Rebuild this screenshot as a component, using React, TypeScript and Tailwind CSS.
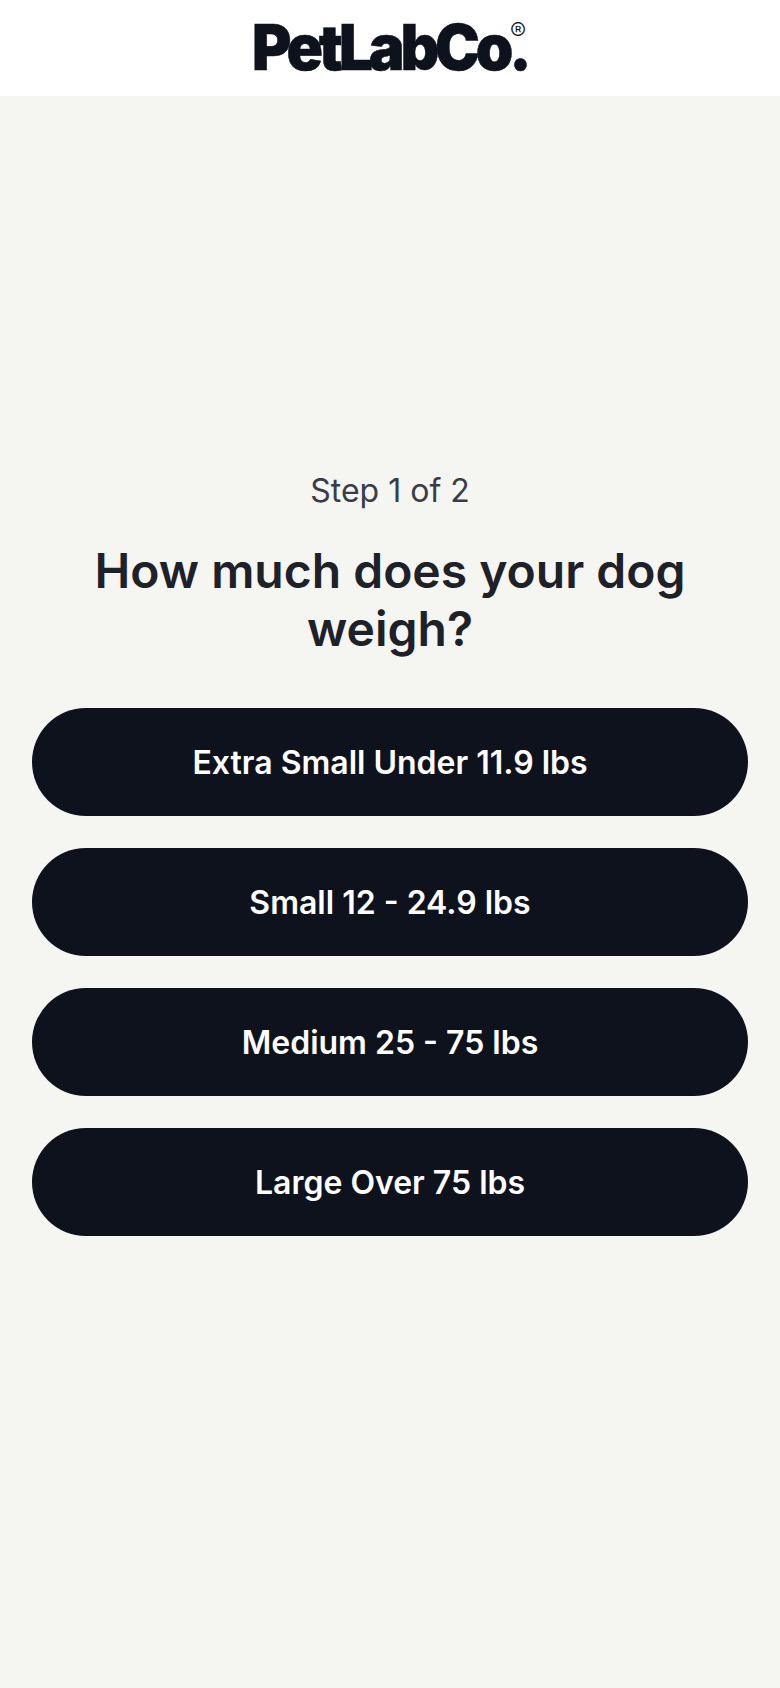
export default function App() {
  const options = ["Extra Small Under 11.9 lbs", "Small 12 - 24.9 lbs", "Medium 25 - 75 lbs", "Large Over 75 lbs"];
  return (
    <div className="min-h-[1688px] bg-[#f5f5f1] font-['Inter',sans-serif]">
      <header className="h-[96px] bg-white flex items-center justify-center">
        <div className="relative w-[272px] text-[#0e121d] mt-[-1px] mr-[4px]">
          <div className="origin-left scale-x-[0.955] whitespace-nowrap font-black text-[63px] leading-none tracking-[-0.07em] [-webkit-text-stroke:0.5px_#0e121d]">PetLabCo.</div>
          <span className="absolute right-[-2px] top-[2px] text-[24px] leading-[28px] font-light">®</span>
        </div>
      </header>
      <main className="px-8 pt-[374px] flex flex-col items-center">
        <p className="text-[32px] leading-[42px] text-[#3a3d47]">Step 1 of 2</p>
        <h1 className="mt-[30px] text-[48px] leading-[58px] font-semibold text-[#1f2129] text-center w-full">How much does your dog weigh?</h1>
        <div className="mt-[50px] w-full flex flex-col gap-8">
          {options.map((o) => (
            <button key={o} className="h-[108px] w-full rounded-[54px] bg-[#0e121d] text-white text-[32px] font-semibold flex items-center justify-center pt-px">
              {o}
            </button>
          ))}
        </div>
      </main>
    </div>
  );
}
